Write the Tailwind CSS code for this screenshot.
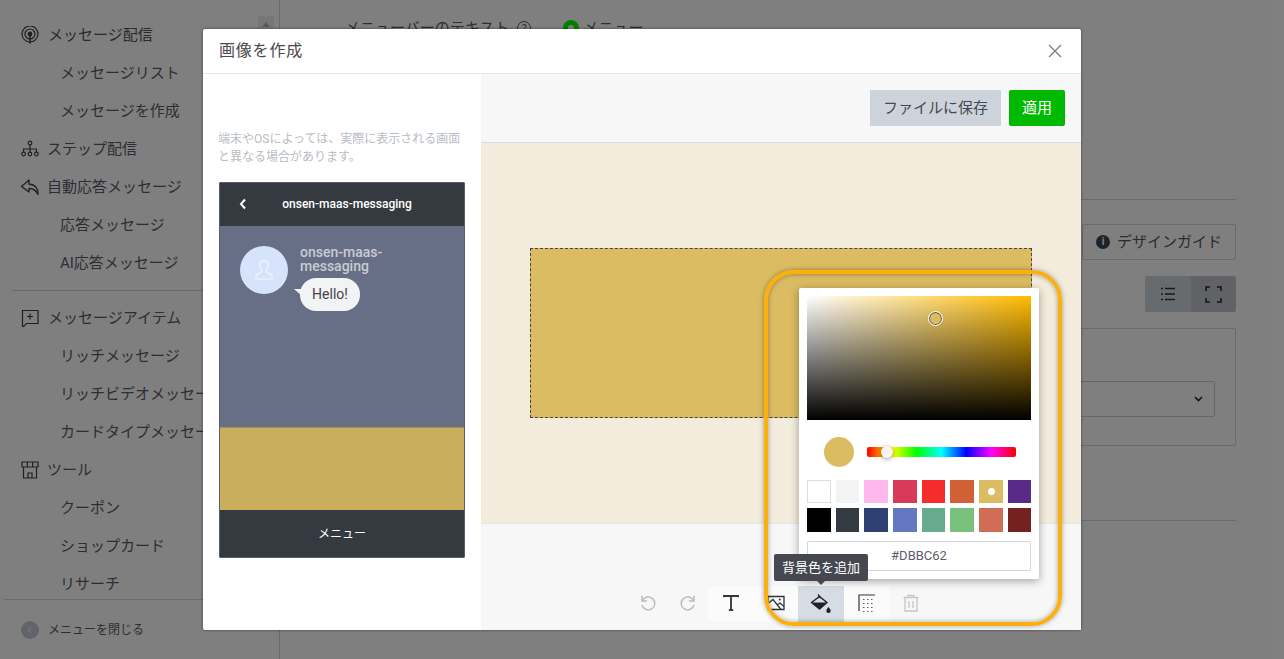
<!DOCTYPE html>
<html lang="ja">
<head>
<meta charset="utf-8">
<title>画像を作成</title>
<script src="https://cdn.jsdelivr.net/npm/@tailwindcss/browser@4"></script>
</head>
<body class="m-0">
<div class="relative flex h-[659px] w-[1284px] overflow-hidden bg-white font-['Roboto','Noto_Sans_CJK_JP',sans-serif] text-[15px] text-[#585d68]">

  <!-- sidebar -->
  <aside class="relative flex h-full w-[280px] shrink-0 flex-col border-r border-[#d5d5d5]">
    <div class="absolute right-[5px] top-[16px] flex h-[18px] w-[16px] justify-center bg-[#efefef] pt-[6px]"><div class="h-0 w-0 border-x-[4px] border-b-[5px] border-x-transparent border-b-[#b5b5b5]"></div></div>
    <nav class="h-[599px] overflow-hidden pt-[16px]">
      <div class="flex h-[38px] items-center pl-[21px] text-[#50555f]">
        <svg class="mr-[9px] h-[18px] w-[18px]" viewBox="0 0 18 18" fill="none" stroke="#3c4048" stroke-width="1.2"><circle cx="9" cy="8" r="8"/><circle cx="9" cy="8" r="5"/><circle cx="9" cy="8" r="1.8" fill="#3c4048"/><path d="M9 8v9.5" stroke-width="1.6"/></svg>
        <span>メッセージ配信</span>
      </div>
      <div class="flex h-[38px] items-center pl-[60px]">メッセージリスト</div>
      <div class="flex h-[38px] items-center pl-[60px]">メッセージを作成</div>
      <div class="flex h-[38px] items-center pl-[21px]">
        <svg class="mr-[8px] h-[18px] w-[18px]" viewBox="0 0 18 18" fill="none" stroke="#3c4048" stroke-width="1.2"><circle cx="9" cy="3" r="1.8"/><circle cx="2.6" cy="14" r="1.8"/><circle cx="9" cy="14" r="1.8"/><circle cx="15.4" cy="14" r="1.8"/><path d="M9 5v7M2.6 12V9h12.8v3"/></svg>
        <span>ステップ配信</span>
      </div>
      <div class="flex h-[38px] items-center pl-[20px]">
        <svg class="mr-[7px] h-[20px] w-[20px]" viewBox="0 0 20 20" fill="none" stroke="#3c4048" stroke-width="1.3" stroke-linejoin="round"><path d="M9 3 1.500 9.500 9 15v-3.500c4 0 7 1.500 9 6 .3-6-3-10-9-10.500z"/></svg>
        <span>自動応答メッセージ</span>
      </div>
      <div class="flex h-[38px] items-center pl-[60px]">応答メッセージ</div>
      <div class="flex h-[38px] items-center pl-[60px]">AI応答メッセージ</div>
      <div class="my-[8px] ml-[12px] h-px bg-[#d5d5d5]"></div>
      <div class="flex h-[38px] items-center pl-[21px]">
        <svg class="mr-[9px] h-[18px] w-[18px]" viewBox="0 0 18 18" fill="none" stroke="#3c4048" stroke-width="1.2"><path d="M1.500 1.500h15.500v13H5.500l-3 3h-1z"/><path d="M9 4.500v6M6 7.500h6"/></svg>
        <span>メッセージアイテム</span>
      </div>
      <div class="flex h-[38px] items-center pl-[60px]">リッチメッセージ</div>
      <div class="flex h-[38px] items-center pl-[60px]">リッチビデオメッセージ</div>
      <div class="flex h-[38px] items-center pl-[60px]">カードタイプメッセージ</div>
      <div class="flex h-[38px] items-center pl-[21px]">
        <svg class="mr-[8px] h-[18px] w-[18px]" viewBox="0 0 18 18" fill="none" stroke="#3c4048" stroke-width="1.2"><path d="M1 1h16v5H1zM6.300 1v5M11.700 1v5M2.500 6v11h13V6M7 17v-5h4v5"/></svg>
        <span>ツール</span>
      </div>
      <div class="flex h-[38px] items-center pl-[60px]">クーポン</div>
      <div class="flex h-[38px] items-center pl-[60px]">ショップカード</div>
      <div class="flex h-[38px] items-center pl-[60px]">リサーチ</div>
    </nav>
    <div class="ml-[4px] flex flex-1 items-center border-t border-[#d5d5d5] pl-[17px] pt-[1px] text-[12px]">
      <div class="mr-[9px] flex h-[18px] w-[18px] items-center justify-center rounded-full bg-[#c2c8d1]">
        <svg class="h-[8px] w-[8px]" viewBox="0 0 8 8" fill="none" stroke="#ffffff" stroke-width="1"><path d="M5 1 2.500 4 5 7"/></svg>
      </div>
      <span>メニューを閉じる</span>
    </div>
  </aside>

  <!-- page behind the dialog -->
  <main class="flex flex-1 flex-col pl-[65px] pr-[48px]">
    <div class="mt-[18px] flex h-[20px] items-center">
      <span>メニューバーのテキスト</span>
      <span class="ml-[8px] flex h-[14px] w-[14px] items-center justify-center rounded-full border border-[#585d68] text-[10px]">?</span>
      <span class="ml-[32px] h-[16px] w-[16px] rounded-full border-[5px] border-[#00ff00] bg-white"></span>
      <span class="ml-[4px]">メニュー</span>
    </div>
    <div class="mt-[161px] h-px bg-[#d5d5d5]"></div>
    <div class="mt-[24px] flex justify-end">
      <div class="flex h-[36px] w-[154px] items-center justify-center rounded-[2px] border border-[#d5d5d5] text-[#55595f]">
        <span class="mr-[7px] flex h-[14px] w-[14px] items-center justify-center rounded-full bg-[#3d4756] text-[10px] font-bold leading-none text-white">i</span>
        デザインガイド
      </div>
    </div>
    <div class="mt-[16px] flex justify-end">
      <div class="flex h-[36px] w-[91px] overflow-hidden rounded-[2px]">
        <div class="flex flex-1 items-center justify-center bg-[#cfd6dc]">
          <svg class="h-[16px] w-[16px]" viewBox="0 0 16 16" fill="none" stroke="#31353c" stroke-width="1.300"><path d="M5 2.500h10M5 8h10M5 13.500h10M1 2.500h2M1 8h2M1 13.500h2"/></svg>
        </div>
        <div class="flex flex-1 items-center justify-center bg-[#c0c5cc]">
          <svg class="h-[17px] w-[17px]" viewBox="0 0 17 17" fill="none" stroke="#22252b" stroke-width="1.500"><path d="M1 5V1h4M12 1h4v4M16 12v4h-4M5 16H1v-4"/></svg>
        </div>
      </div>
    </div>
    <div class="mt-[16px] ml-auto flex h-[118px] w-[600px] flex-col rounded-[2px] border border-[#d5d5d5] pr-[20px] pt-[52px]">
      <div class="flex h-[36px] items-center justify-end rounded-[2px] border border-[#c9ccd0] pr-[11px]">
        <svg class="h-[6px] w-[9px]" viewBox="0 0 9 6" fill="none" stroke="#22252b" stroke-width="1.600"><path d="m1 1 3.500 3.500L8 1"/></svg>
      </div>
    </div>
    <div class="mt-[74px] h-px bg-[#d5d5d5]"></div>
  </main>

  <!-- overlay -->
  <div class="absolute inset-0 bg-black/50"></div>

  <!-- dialog -->
  <section class="absolute left-[203px] top-[29px] flex h-[601px] w-[878px] flex-col rounded-[2px] bg-white shadow-[0_0_3px_rgba(0,0,0,0.5)]">
    <header class="flex h-[45px] shrink-0 items-center justify-between border-b border-[#e8e8e8] pl-[16px] pr-[18px]">
      <h1 class="text-[16px] font-normal tracking-[0.8px] text-[#4a4a4a]">画像を作成</h1>
      <svg class="h-[16px] w-[16px]" viewBox="0 0 16 16" fill="none" stroke="#808080" stroke-width="1.400"><path d="m2 2 12 12M14 2 2 14"/></svg>
    </header>
    <div class="flex min-h-0 flex-1">
      <div class="w-[278px] shrink-0 px-[16px] pt-[56px]">
        <p class="ml-[-1px] text-[12px] leading-[18px] text-[#b7bcc4]">端末やOSによっては、実際に表示される画面と異なる場合があります。</p>
        <div class="mt-[16px] flex h-[376px] w-[246px] flex-col overflow-hidden rounded-[1px] border border-[#565d6e]">
          <div class="relative flex h-[43px] shrink-0 items-center justify-center bg-[#353a40] pb-[2px] pl-[10px] text-[12px] font-medium text-white">
            <svg class="absolute left-[19px] top-[15px] h-[12px] w-[8px]" viewBox="0 0 8 12" fill="none" stroke="#ffffff" stroke-width="2"><path d="M6 1.500 2 6l4 4.500"/></svg>
            onsen-maas-messaging
          </div>
          <div class="flex h-[201px] shrink-0 items-start bg-[#666f86] pl-[20px] pt-[20px]">
            <div class="flex h-[48px] w-[48px] shrink-0 items-center justify-center rounded-full bg-[#d5e3fb]">
              <svg class="h-[22px] w-[22px]" viewBox="0 0 22 22" fill="none" stroke="#eef3fd" stroke-width="1.500"><path d="M11 2c-2.700 0-4.200 2-4.200 4.500 0 2 .9 3.600 1.900 4.700v1.800L3 16v4h16v-4l-5.700-3v-1.800c1-1.100 1.900-2.700 1.900-4.700C15.200 4 13.700 2 11 2z"/></svg>
            </div>
            <div class="ml-[12px] w-[110px]">
              <p class="mt-[-1px] text-[14px] font-medium leading-[14px] text-[#c9ccd3]">onsen-maas-messaging</p>
              <div class="relative mt-[5px] flex h-[33px] w-[60px] items-center justify-center rounded-[16px] bg-[#f2f3f5] text-[14px] text-[#444]">
                Hello!
                <span class="absolute left-[-6px] top-[11px] h-0 w-0 border-l-[8px] border-t-[7px] border-l-transparent border-t-[#f2f3f5]"></span>
              </div>
            </div>
          </div>
          <div class="h-[83px] shrink-0 border-t border-[#a89150] bg-[#c9ae5d]"></div>
          <div class="flex flex-1 items-center justify-center bg-[#353a40] pt-[1px] text-[12px] text-white">メニュー</div>
        </div>
      </div>

      <div class="flex min-w-0 flex-1 flex-col bg-[#f7f7f7]">
        <div class="flex h-[69px] shrink-0 items-start justify-end gap-[8px] border-b border-[#dcdcdc] pr-[16px] pt-[16px]">
          <button class="flex h-[36px] w-[131px] items-center justify-center rounded-[1px] bg-[#cdd3da] text-[15px] text-[#444a52]">ファイルに保存</button>
          <button class="flex h-[36px] w-[56px] items-center justify-center rounded-[2px] bg-[#00b900] text-[15px] text-white">適用</button>
        </div>
        <div class="flex h-[381px] shrink-0 items-start border-b border-[#e6e6e6] bg-[#f3ecdc] pl-[49px] pt-[105px]">
          <div class="h-[170px] w-[502px] border border-dashed border-[#444] bg-[#dbbc62]"></div>
        </div>
        <div class="flex flex-1 items-end pb-[8px] pl-[147px]">
          <div class="flex h-[36px] w-[40px] items-center justify-center pb-[2px]">
            <svg class="h-[18px] w-[18px]" viewBox="0 0 18 18" fill="none" stroke="#b9bcc0" stroke-width="1.500"><path d="M3 2v5h5M3.400 6.700A6.500 6.500 0 1 1 3 11"/></svg>
          </div>
          <div class="flex h-[36px] w-[40px] items-center justify-center pb-[2px]">
            <svg class="h-[18px] w-[18px]" viewBox="0 0 18 18" fill="none" stroke="#b9bcc0" stroke-width="1.500"><path d="M15 2v5h-5M14.600 6.700A6.500 6.500 0 1 0 15 11"/></svg>
          </div>
          <div class="flex h-[36px] bg-[#fbfbfc]">
            <div class="flex w-[46px] items-center justify-center pb-[2px]">
              <svg class="h-[18px] w-[18px]" viewBox="0 0 18 18" fill="none" stroke="#30343b" stroke-width="1.800"><path d="M2 3.200V2h14v1.200M9 2v14.200M6.800 16.200h4.400"/></svg>
            </div>
            <div class="flex w-[44px] items-center justify-center pb-[2px]">
              <svg class="h-[18px] w-[18px]" viewBox="0 0 18 18" fill="none" stroke="#30343b" stroke-width="1.300"><path d="M1 2.500h16v13H1z"/><path d="m1 9.500 5-4 8 10M10 11l3-2 4 3.500" /><circle cx="12.800" cy="5.500" r="1" fill="#30343b" stroke="none"/></svg>
            </div>
            <div class="flex w-[46px] items-center justify-center bg-[#d6dce3]">
              <svg class="h-[20px] w-[22px]" viewBox="0 0 22 20" fill="none"><path d="M8 .5 10.500 4" stroke="#1e2126" stroke-width="1.300"/><path d="M1.500 8.500 9.500 2.500l7.500 6-7.500 6.500z" stroke="#1e2126" stroke-width="1.500" stroke-linejoin="round"/><path d="M1.500 8.500H17l-7.500 6.500z" fill="#1e2126"/><path d="M18.500 13c1.500 2 2.200 2.800 2.200 3.800a2.200 2.200 0 0 1-4.400 0c0-1 .7-1.800 2.200-3.800z" fill="#1e2126"/></svg>
            </div>
            <div class="flex w-[45px] items-center justify-center pb-[2px]">
              <svg class="h-[18px] w-[18px]" viewBox="0 0 18 18" fill="none" stroke="#30343b"><path d="M1 17V1h16" stroke-width="1.200"/><path d="M5 5.500h12M5 9.500h12M5 13.500h12M5 17.500h12" stroke-width=".8" stroke-dasharray="1.500 2.500"/></svg>
            </div>
          </div>
          <div class="flex h-[36px] w-[43px] items-center justify-center pb-[2px]">
            <svg class="h-[18px] w-[18px]" viewBox="0 0 18 18" fill="none" stroke="#c4c7cb" stroke-width="1.300"><path d="M1.500 3.500h15M6 3.500V1.500h6v2M3 3.500v13.500h12V3.500M7 7v7M11 7v7"/></svg>
          </div>
        </div>
      </div>
    </div>

    <!-- colour picker popover -->
    <div class="absolute left-[596px] top-[259px] h-[291px] w-[240px] rounded-[2px] bg-white p-[8px] shadow-[0_2px_8px_rgba(0,0,0,0.35)]">
      <div class="relative h-[124px] w-[224px] bg-[linear-gradient(to_top,#000,transparent),linear-gradient(to_right,#fff,#ffbb00)]">
        <span class="absolute left-[121px] top-[15px] h-[15px] w-[15px] rounded-full border border-white bg-[#dbbc62] shadow-[inset_0_0_0_1px_#555]"></span>
      </div>
      <div class="mt-[17px] flex items-center pl-[17px]">
        <span class="h-[30px] w-[30px] rounded-full bg-[#dbbc62]"></span>
        <div class="relative ml-[13px] h-[10px] w-[149px] rounded-[2px] bg-[linear-gradient(to_right,#f00,#ff0,#0f0,#0ff,#00f,#f0f,#f00)]">
          <span class="absolute left-[14px] top-[-1px] h-[12px] w-[12px] rounded-full bg-[#f5f5f5] shadow-[0_1px_4px_rgba(0,0,0,0.4)]"></span>
        </div>
      </div>
      <div class="mt-[13px] grid grid-cols-[24px_23px_24px_24px_23px_24px_24px_23px] justify-between gap-y-[5px]">
        <span class="h-[23px] border border-[#dddddd] bg-white"></span>
        <span class="h-[23px] bg-[#f1f3f5]"></span>
        <span class="h-[23px] bg-[#ffb8ec]"></span>
        <span class="h-[23px] bg-[#d83a5a]"></span>
        <span class="h-[23px] bg-[#f52c2c]"></span>
        <span class="h-[23px] bg-[#d06036]"></span>
        <span class="flex h-[23px] items-center justify-center bg-[#dbbc62]"><span class="h-[7px] w-[7px] rounded-full bg-white"></span></span>
        <span class="h-[23px] bg-[#5a2a88]"></span>
        <span class="h-[24px] bg-black"></span>
        <span class="h-[24px] bg-[#343a42]"></span>
        <span class="h-[24px] bg-[#2f4073]"></span>
        <span class="h-[24px] bg-[#6577c1]"></span>
        <span class="h-[24px] bg-[#67aa8e]"></span>
        <span class="h-[24px] bg-[#79c17d]"></span>
        <span class="h-[24px] bg-[#cf6d55]"></span>
        <span class="h-[24px] bg-[#75211f]"></span>
      </div>
      <div class="mt-[9px] flex h-[30px] items-center justify-center rounded-[2px] border border-[#d0d5dc] text-[13px] text-[#5c6068]">#DBBC62</div>
    </div>

    <!-- tooltip -->
    <div class="absolute left-[571px] top-[525px] flex h-[27px] w-[94px] items-center justify-center rounded-[2px] bg-[#454851] text-[13px] text-white">
      背景色を追加
      <span class="absolute bottom-[-4px] left-[43px] h-0 w-0 border-x-[4px] border-t-[4px] border-x-transparent border-t-[#454851]"></span>
    </div>

    <!-- annotation highlight -->
    <div class="pointer-events-none absolute left-[561px] top-[241px] h-[356px] w-[298px] rounded-[30px] border-[4px] border-[#fbb00e] shadow-[0_0_5px_rgba(0,0,0,0.35),inset_0_0_5px_rgba(0,0,0,0.35)]"></div>
  </section>
</div>
</body>
</html>
